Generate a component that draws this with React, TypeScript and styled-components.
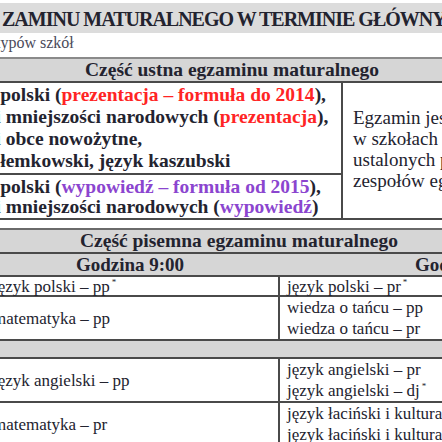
import styled, { createGlobalStyle } from "styled-components";

const Global = createGlobalStyle`
    html, body {
        margin: 0;
        padding: 0;
        background: #ffffff;
        overflow: hidden;
    }
`;

const Page = styled.div`
    width: 442px;
    height: 442px;
    overflow: hidden;
    background: #ffffff;
    font-family: "Liberation Serif", "Times New Roman", serif;
    color: #23232f;
    padding-top: 3px;
    box-sizing: border-box;
`;

const TitleBand = styled.div`
    height: 30px;
    background: #dcdcdc;
    display: flex;
    align-items: flex-end;
    padding: 0 0 4px 2px;
    box-sizing: border-box;
    white-space: nowrap;
    font-weight: 700;
    font-size: 20px;
    letter-spacing: -1px;
    line-height: 1;
`;

const Subtitle = styled.div`
    height: 24px;
    font-size: 16px;
    line-height: 20px;
    color: #4a4a5a;
    margin-left: -4px;
    white-space: nowrap;
`;

const Sheet = styled.div<{ $shift: number; $width: number }>`
    margin-left: ${(p) => -p.$shift}px;
    width: ${(p) => p.$width}px;
`;

const OralTable = styled.div`
    display: grid;
    grid-template-columns: 392px 1fr;
    border-top: 2px solid #8a8a8a;
    border-bottom: 2px solid #4a4a4a;
`;

const HeaderCell = styled.div<{ $pad?: number }>`
    grid-column: 1 / -1;
    background: #d6d6d6;
    font-weight: 700;
    font-size: 19.5px;
    height: 22px;
    line-height: 22px;
    text-align: ${(p) => (p.$pad !== undefined ? "left" : "center")};
    padding-left: ${(p) => p.$pad ?? 0}px;
    border-bottom: 2px solid #4a4a4a;
    white-space: nowrap;
`;

const OralCell = styled.div<{ $last?: boolean }>`
    font-weight: 700;
    font-size: 19.5px;
    line-height: ${(p) => (p.$last ? 20 : 22)}px;
    padding: ${(p) => (p.$last ? "2px 0 1px" : "1px 0")};
    border-right: 2px solid #4a4a4a;
    border-bottom: ${(p) => (p.$last ? "none" : "2px solid #4a4a4a")};
    white-space: nowrap;
`;

const InfoCell = styled.div`
    grid-column: 2;
    grid-row: 2 / 4;
    display: flex;
    align-items: center;
    padding: 0 0 4px 10px;
    font-size: 19px;
    line-height: 21px;
    white-space: nowrap;
`;

const Red = styled.span`
    color: #ff2424;
`;

const Violet = styled.span`
    color: #8b45cf;
`;

const Gap = styled.div`
    height: 8px;
`;

const WrittenTable = styled.div`
    display: grid;
    grid-template-columns: 300px 1fr;
    border-top: 2px solid #6a6a6a;
`;

const HourCell = styled.div<{ $pad?: number }>`
    background: #d6d6d6;
    font-weight: 700;
    font-size: 19px;
    height: 21px;
    line-height: 21px;
    text-align: ${(p) => (p.$pad !== undefined ? "left" : "center")};
    padding-left: ${(p) => p.$pad ?? 0}px;
    border-bottom: 2px solid #4a4a4a;
    white-space: nowrap;
    &:first-of-type {
        border-right: 2px solid #4a4a4a;
    }
`;

const SubjectCell = styled.div<{ $h: number; $left?: boolean }>`
    height: ${(p) => p.$h}px;
    display: flex;
    flex-direction: column;
    justify-content: center;
    padding-left: ${(p) => (p.$left ? 13 : 7)}px;
    font-size: 17px;
    line-height: 21px;
    border-bottom: 2px solid #4a4a4a;
    border-right: ${(p) => (p.$left ? "2px solid #4a4a4a" : "none")};
    white-space: nowrap;
`;

const EmptyRow = styled.div`
    grid-column: 1 / -1;
    height: 16px;
    background: #d6d6d6;
    border-bottom: 2px solid #4a4a4a;
`;

const Sup = styled.sup`
    font-size: 9px;
    vertical-align: 7px;
    line-height: 0;
    margin-left: 2px;
`;

export default function App() {
    return (
        <Page>
            <Global />
            <TitleBand>ZAMINU MATURALNEGO W TERMINIE GŁÓWNYM</TitleBand>
            <Subtitle>typów szkół</Subtitle>

            <Sheet $shift={49} $width={640}>
                <OralTable>
                    <HeaderCell $pad={134}>Część ustna egzaminu maturalnego</HeaderCell>
                    <OralCell>
                        język polski (<Red>prezentacja – formuła do 2014</Red>),
                        <br />
                        języki mniejszości narodowych (<Red>prezentacja</Red>),
                        <br />
                        języki obce nowożytne,
                        <br />
                        język łemkowski, język kaszubski
                    </OralCell>
                    <OralCell $last>
                        język polski (<Violet>wypowiedź – formuła od 2015</Violet>),
                        <br />
                        języki mniejszości narodowych (<Violet>wypowiedź</Violet>)
                    </OralCell>
                    <InfoCell>
                        <div>
                            Egzamin jest przeprowadzany
                            <br />
                            w szkołach według harmonogramów
                            <br />
                            ustalonych przez przewodniczących
                            <br />
                            zespołów egzaminacyjnych
                        </div>
                    </InfoCell>
                </OralTable>
            </Sheet>

            <Gap />

            <Sheet $shift={20} $width={700}>
                <WrittenTable>
                    <HeaderCell $pad={100}>Część pisemna egzaminu maturalnego</HeaderCell>
                    <HourCell>Godzina 9:00</HourCell>
                    <HourCell $pad={135}>Godzina 14:00</HourCell>

                    <SubjectCell $h={18} $left>
                        <div>
                            język polski – pp<Sup>*</Sup>
                        </div>
                    </SubjectCell>
                    <SubjectCell $h={18}>
                        <div>
                            język polski – pr<Sup>*</Sup>
                        </div>
                    </SubjectCell>

                    <SubjectCell $h={42} $left>
                        <div>matematyka – pp</div>
                    </SubjectCell>
                    <SubjectCell $h={42}>
                        <div>wiedza o tańcu – pp</div>
                        <div>wiedza o tańcu – pr</div>
                    </SubjectCell>

                    <EmptyRow />

                    <SubjectCell $h={42} $left>
                        <div>język angielski – pp</div>
                    </SubjectCell>
                    <SubjectCell $h={42}>
                        <div>język angielski – pr</div>
                        <div>
                            język angielski – dj<Sup>*</Sup>
                        </div>
                    </SubjectCell>

                    <SubjectCell $h={42} $left>
                        <div>matematyka – pr</div>
                    </SubjectCell>
                    <SubjectCell $h={42}>
                        <div>język łaciński i kultura antyczna – pp</div>
                        <div>język łaciński i kultura antyczna – pr</div>
                    </SubjectCell>
                </WrittenTable>
            </Sheet>
        </Page>
    );
}
